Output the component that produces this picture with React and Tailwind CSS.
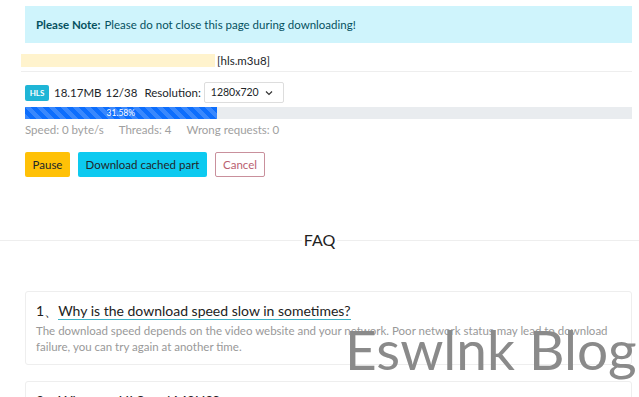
import React from 'react'

export default function App() {
  return (
    <div className="relative w-[639px] h-[397px] overflow-hidden bg-white font-['Lato',sans-serif] text-[#212529]">
      <div className="pl-[25px] pr-[7px] pt-[6px]">
        {/* Alert */}
        <div className="h-[37px] bg-[#cff4fc] px-[11px] flex items-center text-[11.5px] text-[#055160]">
          <span className="font-bold mr-1">Please Note:</span>
          <span>Please do not close this page during downloading!</span>
        </div>

        {/* File name */}
        <div className="-ml-[4px] mt-[11px] pb-[4px] border-b border-[#eeeeee] flex items-center text-[11.5px]">
          <div className="w-[194px] h-[13px] bg-[#fff3cd]" />
          <span className="ml-[2px] leading-[13px]">[hls.m3u8]</span>
        </div>

        {/* Info row */}
        <div className="mt-[10px] flex items-center text-[11.5px]">
          <span className="w-[24px] h-[16px] rounded-[2px] bg-[#1fb5d6] text-white text-[8px] font-bold flex items-center justify-center">HLS</span>
          <span className="ml-[5px]">18.17MB</span>
          <span className="ml-[4px]">12/38</span>
          <span className="ml-[7px]">Resolution:</span>
          <div className="ml-[3px] h-[21px] border border-[#dddddd] rounded-[2px] flex items-center gap-[6px] pl-[6px] pr-[10px]">
            <span className="text-[10.5px]">1280x720</span>
            <svg width="8" height="6" viewBox="0 0 8 6" fill="none" className="shrink-0">
              <path d="M1 1.5 L4 4.5 L7 1.5" stroke="#333" strokeWidth="1.2" />
            </svg>
          </div>
        </div>

        {/* Progress */}
        <div className="mt-[4px] h-[12px] bg-[#e9ecef] flex">
          <div className="w-[31.58%] h-full bg-[#0d6efd] bg-[linear-gradient(45deg,rgba(255,255,255,.18)_25%,transparent_25%,transparent_50%,rgba(255,255,255,.18)_50%,rgba(255,255,255,.18)_75%,transparent_75%,transparent)] bg-[length:12px_12px] text-white text-[8.5px] flex items-center justify-center">
            31.58%
          </div>
        </div>

        {/* Stats */}
        <div className="mt-[2px] flex gap-[15px] text-[11.5px] text-[#a0a0a0]">
          <span>Speed: 0 byte/s</span>
          <span>Threads: 4</span>
          <span>Wrong requests: 0</span>
        </div>

        {/* Buttons */}
        <div className="mt-[14px] flex gap-[8px] text-[11.5px]">
          <button className="w-[45px] h-[25px] rounded-[2px] bg-[#ffc107] text-[#212529]">Pause</button>
          <button className="w-[129px] h-[25px] rounded-[2px] bg-[#0dcaf0] text-[#212529]">Download cached part</button>
          <button className="w-[50px] h-[25px] rounded-[2px] border border-[#c9909c] text-[#b9606f] bg-white">Cancel</button>
        </div>
      </div>

      {/* FAQ divider */}
      <div className="mt-[55px] relative h-[16px] flex items-center justify-center">
        <div className="absolute inset-x-0 top-1/2 border-t border-[#eeeeee]" />
        <span className="relative bg-white px-[2px] text-[16px] leading-none text-[#222]">FAQ</span>
      </div>

      {/* FAQ cards */}
      <div className="pl-[25px] pr-[7px] mt-[43px] flex flex-col gap-[16px]">
        <div className="border border-[#eeeeee] rounded-[3px] px-[10px] pt-[9px] pb-[9px]">
          <div className="text-[14px] leading-[20px] text-[#222]">
            1、<span className="border-b border-[#3bb2c6]">Why is the download speed slow in sometimes?</span>
          </div>
          <p className="mt-[2px] text-[11.5px] leading-[16px] text-[#999]">
            The download speed depends on the video website and your network. Poor network status may lead to download failure, you can try again at another time.
          </p>
        </div>
        <div className="border border-[#eeeeee] rounded-[3px] px-[10px] pt-[9px] pb-[9px]">
          <div className="text-[14px] leading-[20px] text-[#222]">
            2、<span className="border-b border-[#3bb2c6]">What are HLS and M3U8?</span>
          </div>
        </div>
      </div>

      {/* Watermark */}
      <div className="absolute left-[345px] top-[322px] whitespace-nowrap text-[55px] font-normal leading-none text-[#8a8a8a] pointer-events-none">
        Eswlnk Blog
      </div>
    </div>
  )
}
